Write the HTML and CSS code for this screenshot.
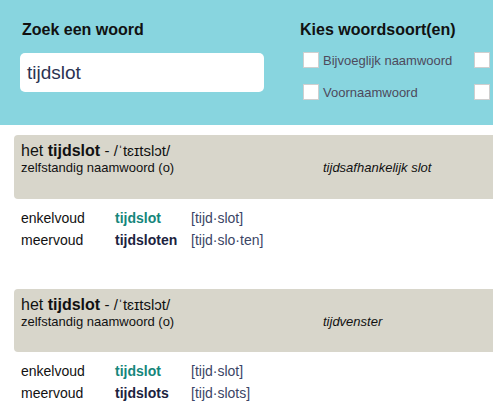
FILE: index.html
```html
<!DOCTYPE html>
<html lang="nl">
<head>
<meta charset="utf-8">
<title>tijdslot</title>
<link rel="stylesheet" href="styles.css">
</head>
<body>
<div class="page">
  <header class="search">
    <div class="search-col">
      <h2 class="search-title title-left">Zoek een woord</h2>
      <div class="search-input">tijdslot</div>
    </div>
    <div class="filter-col">
      <h2 class="search-title">Kies woordsoort(en)</h2>
      <div class="checks">
        <label class="check"><span class="box"></span>Bijvoeglijk naamwoord</label>
        <label class="check"><span class="box"></span></label>
        <label class="check"><span class="box"></span>Voornaamwoord</label>
        <label class="check"><span class="box"></span></label>
      </div>
    </div>
  </header>

  <section class="entry">
    <div class="entry-head">
      <div class="entry-title">het <b>tijdslot</b> <span class="phon">- /ˈtɛɪtslɔt/</span></div>
      <div class="entry-meta">
        <span>zelfstandig naamwoord (o)</span>
        <i>tijdsafhankelijk slot</i>
      </div>
    </div>
    <div class="forms">
      <span>enkelvoud</span><b class="sing">tijdslot</b><span class="syl">[tijd·slot]</span>
      <span>meervoud</span><b class="plur">tijdsloten</b><span class="syl">[tijd·slo·ten]</span>
    </div>
  </section>

  <section class="entry">
    <div class="entry-head">
      <div class="entry-title">het <b>tijdslot</b> <span class="phon">- /ˈtɛɪtslɔt/</span></div>
      <div class="entry-meta">
        <span>zelfstandig naamwoord (o)</span>
        <i>tijdvenster</i>
      </div>
    </div>
    <div class="forms">
      <span>enkelvoud</span><b class="sing">tijdslot</b><span class="syl">[tijd·slot]</span>
      <span>meervoud</span><b class="plur">tijdslots</b><span class="syl">[tijd·slots]</span>
    </div>
  </section>
</div>
</body>
</html>
```

FILE: styles.css
```css
html, body {
  margin: 0;
  padding: 0;
  background: #ffffff;
}

body {
  font-family: "Liberation Sans", Arial, sans-serif;
  color: #111111;
}

.page {
  width: 493px;
  height: 419px;
  overflow: hidden;
}

.search {
  background: #88d5df;
  height: 125px;
  box-sizing: border-box;
  padding: 21px 0 0 20px;
  display: flex;
  white-space: nowrap;
}

.search-col {
  width: 244px;
  flex: none;
}

.filter-col {
  margin-left: 36px;
  flex: none;
}

.search-title {
  margin: 0;
  font-size: 16px;
  line-height: 18px;
  font-weight: bold;
  color: #111111;
}

.title-left {
  padding-left: 2px;
}

.search-input {
  margin-top: 14px;
  height: 39px;
  box-sizing: border-box;
  background: #ffffff;
  border-radius: 5px;
  padding: 0 7px;
  font-size: 19px;
  line-height: 39px;
  color: #2b3452;
}

.checks {
  margin-top: 13px;
  margin-left: 3px;
  display: grid;
  grid-template-columns: 171px 171px;
  row-gap: 16px;
}

.check {
  display: flex;
  align-items: center;
  gap: 4px;
  height: 16px;
  font-size: 13px;
  color: #4d4a5c;
}

.box {
  width: 16px;
  height: 16px;
  box-sizing: border-box;
  background: #ffffff;
  border: 1px solid #cfcfcf;
  flex: none;
}

.entry {
  margin-left: 14px;
  width: 620px;
}

.entry + .entry {
  margin-top: 38px;
}

.entry:first-of-type {
  margin-top: 10px;
}

.entry-head {
  background: #d8d6cb;
  border-radius: 4px;
  padding: 7px 7px 23px;
  height: 64px;
  box-sizing: border-box;
}

.entry + .entry .entry-head {
  height: 63px;
}

.entry-title {
  font-size: 16px;
  line-height: 18px;
}

.phon {
  font-size: 15px;
}

.entry-meta {
  display: grid;
  grid-template-columns: 302px auto;
  font-size: 13px;
  line-height: 16px;
}

.forms {
  margin-top: 8px;
  padding-left: 7px;
  display: grid;
  grid-template-columns: 94px 76px auto;
  font-size: 14px;
  line-height: 22px;
  color: #111111;
}

.sing {
  color: #15867b;
}

.plur {
  color: #1c2340;
}

.syl {
  color: #3b4565;
}
```
